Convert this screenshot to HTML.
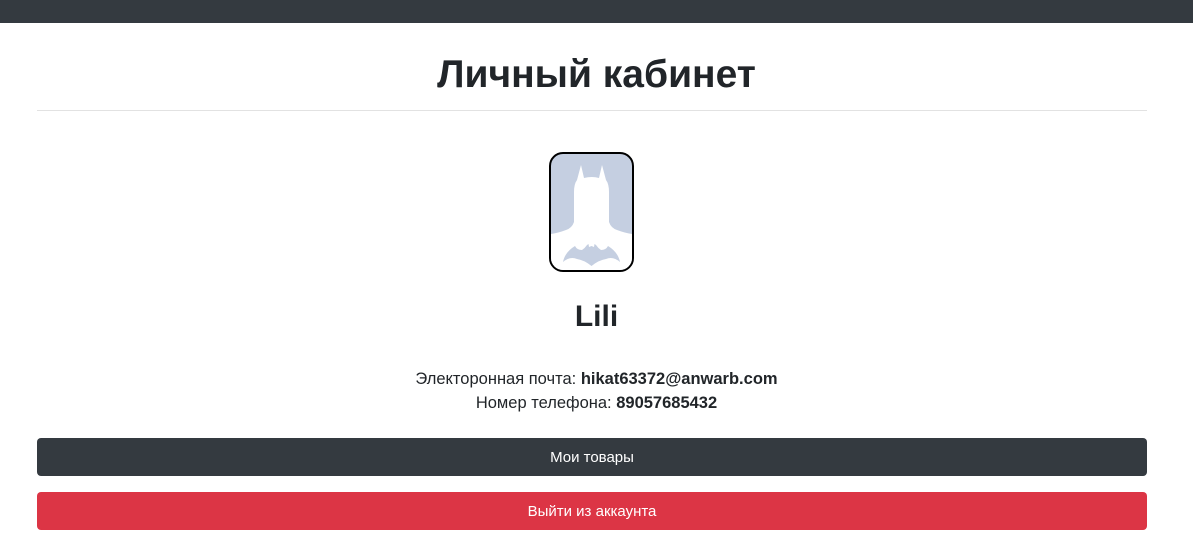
<!DOCTYPE html>
<html><head><meta charset="utf-8"><style>
body{margin:0;background:#fff;font-family:"Liberation Sans","DejaVu Sans",sans-serif;color:#212529;width:1193px;height:559px;overflow:hidden;position:relative}
.top{position:absolute;left:0;top:0;width:1193px;height:23px;background:#343a40}
h1{position:absolute;top:52px;left:0;width:1193px;text-align:center;margin:0;font-size:39px;line-height:46px;font-weight:bold}
.hr{position:absolute;left:37px;top:110px;width:1110px;height:1px;background:#e2e2e2}
.av{position:absolute;left:549px;top:152px;width:81px;height:116px;border:2px solid #000;border-radius:14px;background:#c5cfe1;overflow:hidden}
.name{position:absolute;top:298px;left:0;width:1193px;text-align:center;font-size:30px;font-weight:bold;line-height:38px}
.info{position:absolute;top:367px;left:0;width:1193px;text-align:center;font-size:16.5px;line-height:24px}
.btn{position:absolute;left:37px;width:1110px;height:38px;border-radius:4px;color:#fff;text-align:center;font-size:15px;line-height:40px}
</style></head><body>
<div class="top"></div>
<h1>Личный кабинет</h1>
<div class="hr"></div>
<div class="av"><svg width="81" height="116" viewBox="0 0 81 116">
<path d="M30 11 L33 24 Q41 22 48 24 L51 11 L55 26 Q58 30 58 38 L58 68 Q60 74 66 76 Q74 79 81 80 L81 116 L0 116 L0 80 Q7 79 15 76 Q21 74 23 68 L23 38 Q23 30 26 26 Z" fill="#fff"/>
<path d="M12 108 Q14 98 24 92 Q26 96 31 96 Q34 94 36 91 L37.5 90 L38 93 L40.5 92 L43 93 L43.5 90 L45 91 Q47 94 50 96 Q55 96 57 92 Q67 98 69 108 Q62 102 55 105 Q48 106 40.5 112 Q33 106 26 105 Q19 102 12 108Z" fill="#c5cfe1"/>
</svg></div>
<div class="name">Lili</div>
<div class="info">Электоронная почта: <b>hikat63372@anwarb.com</b><br>Номер телефона: <b>89057685432</b></div>
<div class="btn" style="top:438px;background:#343a40">Мои товары</div>
<div class="btn" style="top:492px;background:#dc3545">Выйти из аккаунта</div>
</body></html>
